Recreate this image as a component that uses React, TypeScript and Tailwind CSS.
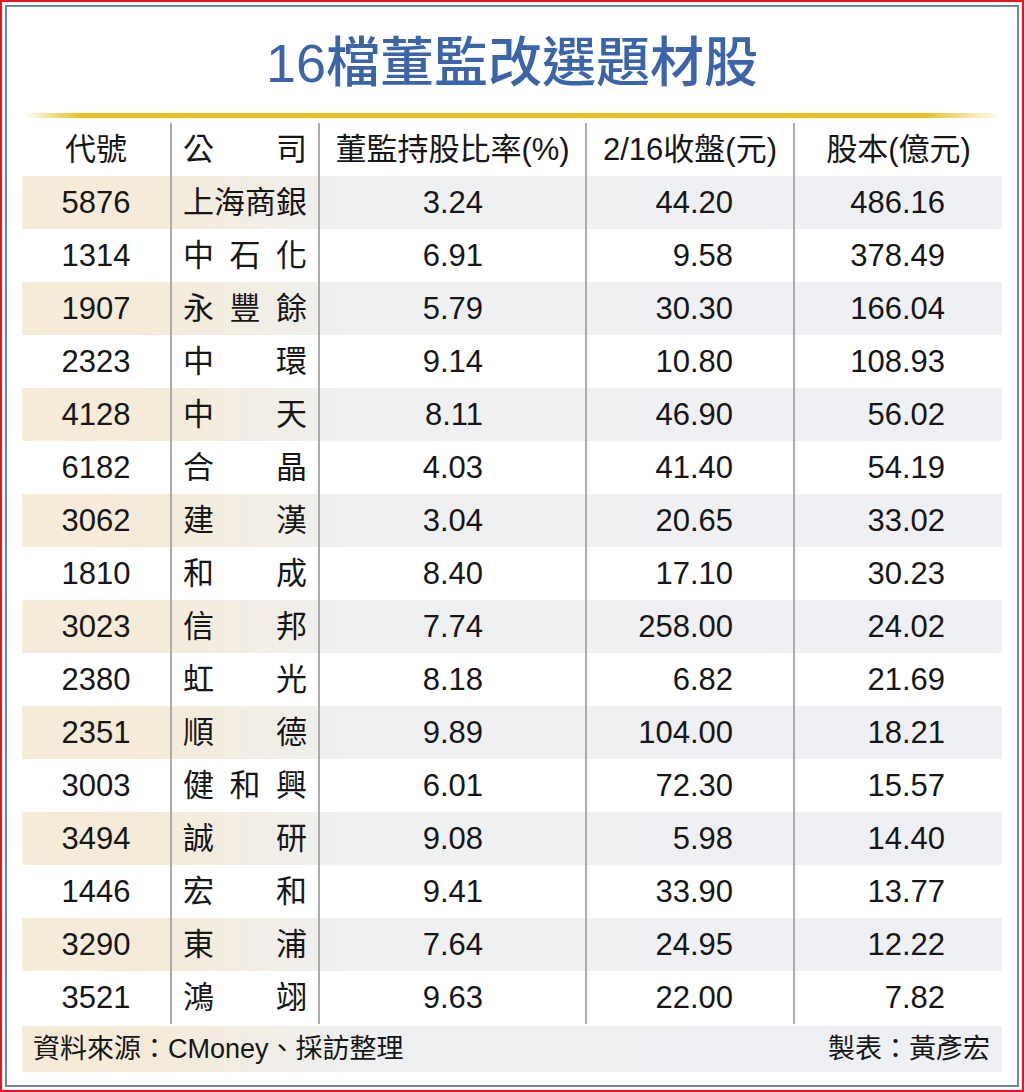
import React from "react";

type Row = [string, string, string, string, string];

const rows: Row[] = [
  ["5876", "上海商銀", "3.24", "44.20", "486.16"],
  ["1314", "中石化", "6.91", "9.58", "378.49"],
  ["1907", "永豐餘", "5.79", "30.30", "166.04"],
  ["2323", "中環", "9.14", "10.80", "108.93"],
  ["4128", "中天", "8.11", "46.90", "56.02"],
  ["6182", "合晶", "4.03", "41.40", "54.19"],
  ["3062", "建漢", "3.04", "20.65", "33.02"],
  ["1810", "和成", "8.40", "17.10", "30.23"],
  ["3023", "信邦", "7.74", "258.00", "24.02"],
  ["2380", "虹光", "8.18", "6.82", "21.69"],
  ["2351", "順德", "9.89", "104.00", "18.21"],
  ["3003", "健和興", "6.01", "72.30", "15.57"],
  ["3494", "誠研", "9.08", "5.98", "14.40"],
  ["1446", "宏和", "9.41", "33.90", "13.77"],
  ["3290", "東浦", "7.64", "24.95", "12.22"],
  ["3521", "鴻翊", "9.63", "22.00", "7.82"],
];

const band =
  "bg-[linear-gradient(to_right,#f6ecd8_0%,#f5ebd8_13%,#eff0f1_34%,#eef0f4_100%)]";

function Name({ text }: { text: string }) {
  return (
    <div className="flex h-full items-center justify-between border-l-2 border-[#ababab] px-[11px]">
      {Array.from(text).map((c, i) => (
        <span key={i}>{c}</span>
      ))}
    </div>
  );
}

export default function App() {
  return (
    <div className="h-[1092px] w-[1024px] border-2 border-[#e8141c] bg-white p-[3px] font-['Liberation_Sans','Noto_Sans_CJK_TC',sans-serif] text-[#161616]">
      <div className="flex h-full flex-col border-2 border-[#7088a6] bg-white px-[15px]">
        <div className="flex h-[106px] items-center justify-center pt-[6px]">
          <h1 className="text-[54px] font-medium leading-none text-[#3b64a9]">
            16檔董監改選題材股
          </h1>
        </div>
        <div className="h-[5px] bg-[linear-gradient(to_right,#ffffff_0%,#e5c022_6%,#e5c022_92%,#ffffff_100%)]" />
        <div className="mt-[5px] text-[31px] leading-none">
          <div className="grid h-[53px] grid-cols-[148px_148px_267px_208px_209px]">
            <div className="flex items-center justify-center">代號</div>
            <Name text="公司" />
            <div className="flex items-center justify-center border-l-2 border-[#ababab]">
              董監持股比率(%)
            </div>
            <div className="flex items-center justify-center border-l-2 border-[#ababab]">
              2/16收盤(元)
            </div>
            <div className="flex items-center justify-center border-l-2 border-[#ababab]">
              股本(億元)
            </div>
          </div>
          {rows.map((r, i) => (
            <div
              key={r[0]}
              className={`grid h-[53px] grid-cols-[148px_148px_267px_208px_209px] ${
                i % 2 === 0 ? band : "bg-white"
              }`}
            >
              <div className="flex items-center justify-center">{r[0]}</div>
              <Name text={r[1]} />
              <div className="flex items-center justify-end border-l-2 border-[#ababab] pr-[102px]">
                {r[2]}
              </div>
              <div className="flex items-center justify-end border-l-2 border-[#ababab] pr-[60px]">
                {r[3]}
              </div>
              <div className="flex items-center justify-end border-l-2 border-[#ababab] pr-[57px]">
                {r[4]}
              </div>
            </div>
          ))}
        </div>
        <div
          className={`mt-[2px] flex h-[46px] items-center justify-between pl-[11px] pr-[12px] text-[27px] leading-none ${band}`}
        >
          <span>資料來源：CMoney、採訪整理</span>
          <span>製表：黃彥宏</span>
        </div>
      </div>
    </div>
  );
}
